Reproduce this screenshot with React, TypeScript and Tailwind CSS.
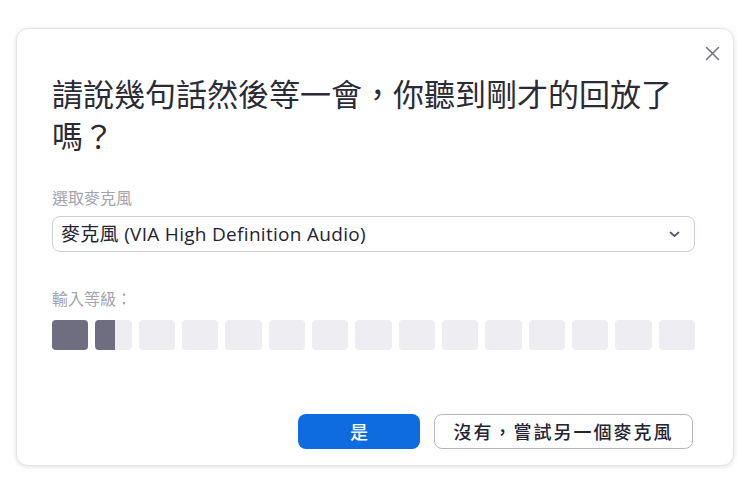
import React from "react";

const font = { fontFamily: '"Noto Sans CJK TC", "Noto Sans", sans-serif' };
const selFont = { fontFamily: '"Open Sans", "Noto Sans CJK TC", sans-serif' };

export default function App() {
  const bars = Array.from({ length: 15 });
  return (
    <div className="w-[750px] h-[494px] bg-white pt-[28px] pl-[16px]" style={font}>
      <div className="relative w-[718px] h-[438px] rounded-[12px] bg-white border border-[#e4e4e8] shadow-[0_1px_5px_rgba(0,0,0,0.12)] pl-[35px] pr-[38px] pt-[43px] flex flex-col">
        <button className="absolute right-[13px] top-[16px] w-[16px] h-[16px] flex items-center justify-center">
          <svg width="15" height="15" viewBox="0 0 15 15" fill="none" stroke="#75757f" strokeWidth="1.6" strokeLinecap="round">
            <path d="M1.5 1.5 L13.5 13.5 M13.5 1.5 L1.5 13.5" />
          </svg>
        </button>
        <h1 className="text-[31px] leading-[42px] text-[#2b2b36] font-normal">
          請說幾句話然後等一會，你聽到剛才的回放了嗎？
        </h1>
        <div className="mt-[29px] text-[16px] leading-[24px] text-[#a3a3ad]">選取麥克風</div>
        <div className="mt-[7px] h-[36px] rounded-[8px] border border-[#cfcfd8] flex items-center justify-between pl-[8px] pr-[14px]">
          <span className="text-[19px] tracking-[0.3px] text-[#232333]" style={selFont}>麥克風 (VIA High Definition Audio)</span>
          <svg width="11" height="7" viewBox="0 0 11 7" fill="none" stroke="#5a5a66" strokeWidth="1.8" strokeLinecap="round" strokeLinejoin="round">
            <path d="M1.5 1.5 L5.5 5 L9.5 1.5" />
          </svg>
        </div>
        <div className="mt-[34px] text-[16px] leading-[24px] text-[#a3a3ad]">輸入等級：</div>
        <div className="mt-[10px] flex gap-[7px]">
          {bars.map((_, i) => (
            <div
              key={i}
              className="relative flex-1 h-[30px] rounded-[4px] bg-[#ededf2] overflow-hidden"
            >
              {i === 0 && <div className="absolute inset-0 bg-[#6e6e80]" />}
              {i === 1 && <div className="absolute left-0 top-0 bottom-0 w-[20px] bg-[#6e6e80]" />}
            </div>
          ))}
        </div>
        <div className="mt-[64px] flex justify-end gap-[14px] pr-[2px]">
          <button className="w-[122px] h-[35px] rounded-[8px] bg-[#0e6be0] text-white text-[18px] font-medium flex items-center justify-center">
            是
          </button>
          <button className="w-[259px] h-[35px] rounded-[8px] border-[1.5px] border-[#b5b5bd] bg-white text-[#232333] text-[18px] tracking-[2px] font-medium flex items-center justify-center">
            沒有，嘗試另一個麥克風
          </button>
        </div>
      </div>
    </div>
  );
}
